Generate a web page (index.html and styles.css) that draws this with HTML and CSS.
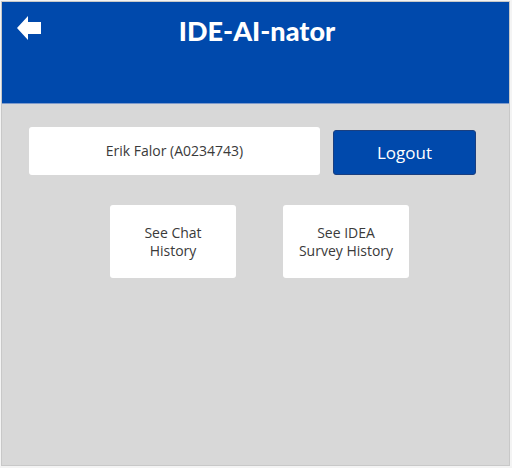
FILE: index.html
```html
<!DOCTYPE html>
<html>
<head>
<meta charset="utf-8">
<link rel="stylesheet" href="styles.css">
</head>
<body>
<div class="frame">
  <header class="header">
    <button class="back" aria-label="Back">
      <svg width="25" height="25" viewBox="0 0 25 25"><path d="M0 12 L11 0 L11 6 L24 6 L24 18 L11 18 L11 24 Z" fill="#fff"/></svg>
    </button>
    <h1 class="title">IDE-AI-nator</h1>
  </header>
  <main class="content">
    <div class="user-row">
      <div class="user-box">Erik Falor (A0234743)</div>
      <button class="logout">Logout</button>
    </div>
    <div class="nav-row">
      <button class="nav-card">See Chat<br>History</button>
      <button class="nav-card">See IDEA<br>Survey History</button>
    </div>
  </main>
</div>
</body>
</html>
```
FILE: styles.css
```css
* { box-sizing: border-box; }
html, body { margin: 0; padding: 0; background: #f4f4f4; }
body { padding: 1px; font-family: "Open Sans", "Noto Sans", sans-serif; }
.frame {
  width: 509px;
  height: 465px;
  border: 1px solid #c8c8c8;
  background: #d8d8d8;
  display: flex;
  flex-direction: column;
}
.header {
  height: 102px;
  background: #0049ac;
  position: relative;
  display: flex;
  justify-content: center;
  border-bottom: 1px solid #7d9acb;
}
.back {
  position: absolute;
  left: 15px;
  top: 14px;
  padding: 0;
  border: 0;
  background: none;
  line-height: 0;
}
.title {
  margin: 12px 0 0 3px;
  font-family: Lato, "Open Sans", sans-serif;
  font-weight: 900;
  font-size: 27px;
  line-height: 34px;
  color: #fff;
}
.content {
  padding: 23px 0 0 27px;
}
.user-row {
  display: flex;
  align-items: flex-end;
  gap: 13px;
}
.user-box {
  width: 291px;
  height: 48px;
  background: #fff;
  border-radius: 3px;
  display: flex;
  align-items: center;
  justify-content: center;
  font-size: 14px;
  color: #3a3a3a;
  padding-bottom: 2px;
}
.logout {
  width: 143px;
  height: 45px;
  background: #0049ac;
  border: 1px solid #1a3f80;
  border-radius: 3px;
  color: #fff;
  font-family: "Open Sans", sans-serif;
  font-size: 17px;
  padding: 0;
}
.nav-row {
  display: flex;
  gap: 47px;
  margin: 30px 0 0 81px;
}
.nav-card {
  width: 126px;
  height: 73px;
  background: #fff;
  border: 0;
  border-radius: 3px;
  font-family: "Open Sans", sans-serif;
  font-size: 14px;
  line-height: 18px;
  color: #3a3a3a;
  padding: 0;
}
```
